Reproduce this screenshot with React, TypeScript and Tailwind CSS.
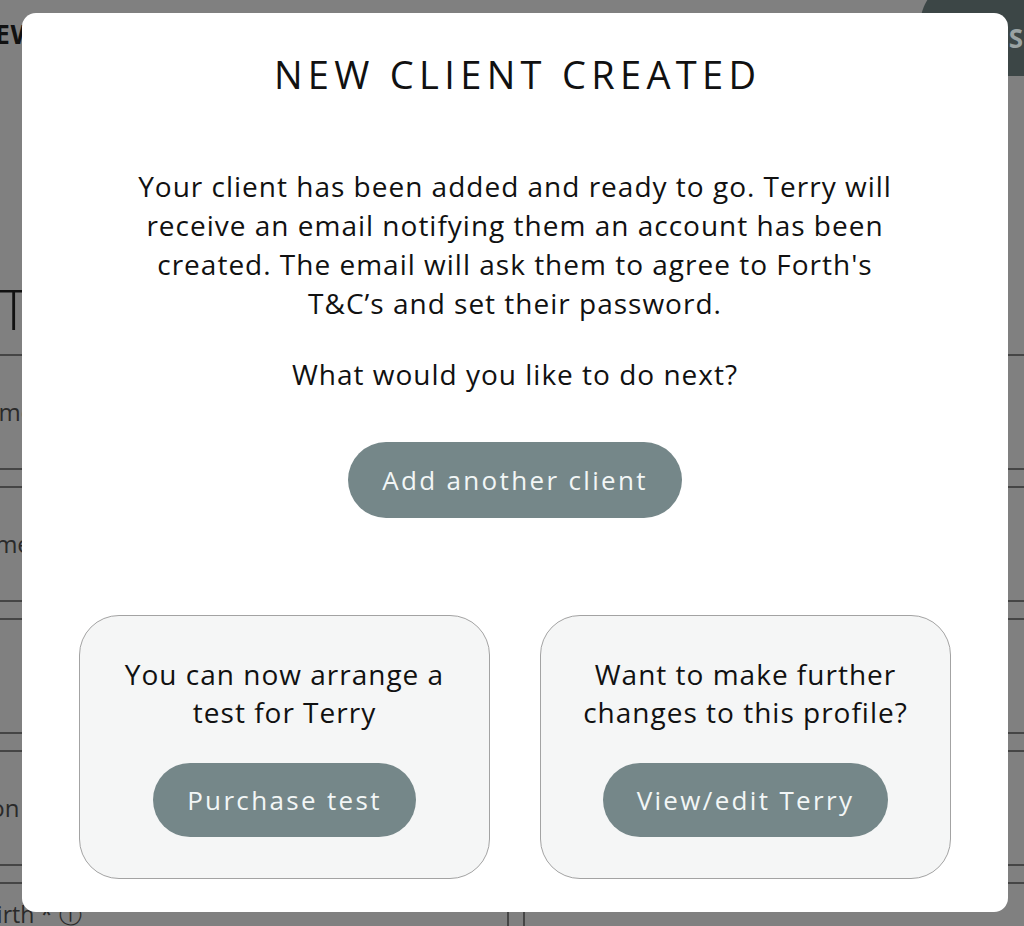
import React from "react";

const font = { fontFamily: '"Open Sans", "Noto Sans", sans-serif' };

function FieldBox({ label, shift }: { label: string; shift: string }) {
  return (
    <div className="shrink-0 h-[116px] border-y-2 border-[#454545] flex items-center">
      <span className={`text-[24px] text-[#2a2a2a] whitespace-nowrap ${shift}`}>{label}</span>
    </div>
  );
}

export default function App() {
  return (
    <div className="relative w-[1024px] h-[926px] overflow-hidden bg-white" style={font}>
      {/* background page */}
      <div className="w-full h-full bg-[#808080] flex flex-col">
        <div className="shrink-0 flex items-start justify-between h-[76px]">
          <div className="pt-[16px] text-[27px] font-bold text-[#111] -ml-[28px] tracking-wide leading-[36px]">NEW</div>
          <div className="-mt-[24px] h-[100px] w-[104px] bg-[#3c4646] rounded-l-full flex items-center justify-end">
            <span className="mt-[24px] text-[26px] font-bold text-[#9aa3a3] mr-[1px]">S</span>
          </div>
        </div>
        <div className="shrink-0 h-[278px] flex items-end pb-[14px]">
          <span className="text-[56px] leading-[64px] font-light text-[#111] -ml-[150px]">CLIENT</span>
        </div>
        <div className="shrink-0 flex flex-col gap-[16px]">
          <FieldBox label="First name" shift="-ml-[84px]" />
          <FieldBox label="Last name" shift="-ml-[85px]" />
          <FieldBox label="" shift="" />
          <FieldBox label="Relation" shift="-ml-[72px]" />
          <div className="shrink-0 relative h-[60px] border-t-2 border-[#454545] flex items-start">
            <span className="text-[23px] text-[#2a2a2a] pt-[19px] -ml-[18px] whitespace-nowrap leading-none">Birth * ⓘ</span>
            <div className="absolute left-[507px] top-[26px] h-full w-[18px] border-x-2 border-[#454545]" />
          </div>
        </div>
      </div>

      {/* modal */}
      <div className="absolute left-[22px] top-[13px] w-[986px] h-[899px] bg-white rounded-[14px] flex flex-col items-center text-[#111]">
        <h1 className="mt-[35px] pl-[0.14em] text-[38px] leading-[52px] tracking-[0.14em]">
          NEW CLIENT CREATED
        </h1>
        <p className="mt-[67px] text-center text-[28px] leading-[39px] tracking-[1px]">
          Your client has been added and ready to go. Terry will<br />
          receive an email notifying them an account has been<br />
          created. The email will ask them to agree to Forth's<br />
          T&amp;C’s and set their password.
        </p>
        <p className="mt-[32px] text-[28px] leading-[39px] tracking-[1px]">What would you like to do next?</p>
        <button className="mt-[48px] h-[76px] px-[34px] rounded-full bg-[#758789] text-[#f2f6f6] text-[26px] tracking-[0.09em]">
          Add another client
        </button>
        <div className="mt-[97px] w-full px-[57px] grid grid-cols-2 gap-[50px]">
          <div className="h-[264px] rounded-[40px] border-[1.5px] border-[#a3a3a3] bg-[#f5f6f6] flex flex-col items-center pt-[39px]">
            <p className="text-center text-[28px] leading-[38px] tracking-[1px]">
              You can now arrange a<br />test for Terry
            </p>
            <button className="mt-[32px] h-[74px] px-[34px] rounded-full bg-[#758789] text-[#f2f6f6] text-[26px] tracking-[0.09em]">
              Purchase test
            </button>
          </div>
          <div className="h-[264px] rounded-[40px] border-[1.5px] border-[#a3a3a3] bg-[#f5f6f6] flex flex-col items-center pt-[39px]">
            <p className="text-center text-[28px] leading-[38px] tracking-[1px]">
              Want to make further<br />changes to this profile?
            </p>
            <button className="mt-[32px] h-[74px] px-[34px] rounded-full bg-[#758789] text-[#f2f6f6] text-[26px] tracking-[0.09em]">
              View/edit Terry
            </button>
          </div>
        </div>
      </div>
    </div>
  );
}
